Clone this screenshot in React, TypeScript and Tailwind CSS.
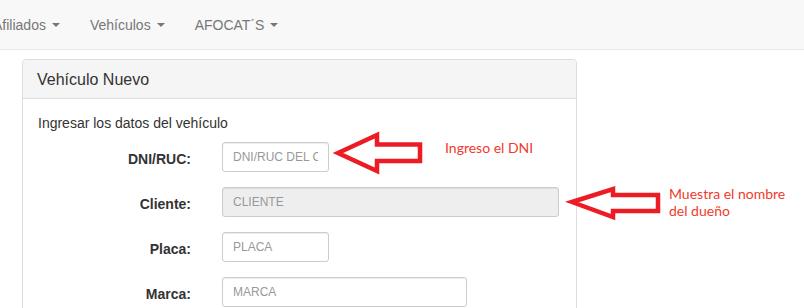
const navItems = [
  { label: "Afiliados", first: true },
  { label: "Vehículos" },
  { label: "AFOCAT´S" },
];

function Caret() {
  return (
    <span className="ml-[6px] inline-block h-0 w-0 border-x-4 border-t-4 border-x-transparent border-t-[#777] align-middle" />
  );
}

function Field({
  label,
  placeholder,
  width,
  disabled,
}: {
  label: string;
  placeholder: string;
  width: string;
  disabled?: boolean;
}) {
  return (
    <div className="mb-[15px] flex">
      <label className="w-[153px] pt-[7px] text-right text-[14px] font-bold leading-5 text-[#333]">{label}</label>
      <input
        disabled={disabled}
        placeholder={placeholder}
        className={`ml-[31px] h-[30px] rounded-[3px] border border-[#ccc] px-[10px] text-[12px] text-[#555] shadow-[inset_0_1px_1px_rgba(0,0,0,0.075)] outline-none placeholder:text-[#999] ${width} ${
          disabled ? "bg-[#eee]" : "bg-white"
        }`}
      />
    </div>
  );
}

export default function App() {
  return (
    <div className="relative h-[308px] w-[804px] overflow-hidden bg-white font-['Liberation_Sans',Arial,sans-serif] text-[#333]">
      <nav className="flex h-[50px] items-center border-b border-[#e7e7e7] bg-[#f8f8f8]">
        {navItems.map((item) => (
          <a
            key={item.label}
            className={`flex items-center px-[15px] text-[14px] leading-5 text-[#777] ${item.first ? "-ml-[22px]" : ""}`}
          >
            {item.label}
            <Caret />
          </a>
        ))}
      </nav>

      <div className="ml-[22px] mt-[9px] w-[555px] rounded border border-[#ddd]">
        <div className="rounded-t border-b border-[#ddd] bg-[#f5f5f5] px-[14px] pb-[9px] pt-[11px] text-[16px] leading-[17.6px]">
          Vehículo Nuevo
        </div>
        <div className="px-[15px] pt-[14px]">
          <p className="mb-[9px] text-[14px] leading-5">Ingresar los datos del vehículo</p>
          <Field label="DNI/RUC:" placeholder="DNI/RUC DEL CLIENTE" width="w-[107px]" />
          <Field label="Cliente:" placeholder="CLIENTE" width="w-[337px]" disabled />
          <Field label="Placa:" placeholder="PLACA" width="w-[107px]" />
          <Field label="Marca:" placeholder="MARCA" width="w-[245px]" />
        </div>
      </div>

      {/* annotations drawn over the screenshot */}
      <svg className="pointer-events-none absolute left-0 top-0" width="804" height="308">
        <polygon
          points="338,153 377,135 377,144.5 420,144.5 420,161 377,161 377,171"
          fill="none"
          stroke="#ed1c24"
          strokeWidth="4.5"
          strokeLinejoin="miter"
        />
        <polygon
          points="572,202 613,189 613,195 658,195 658,211 613,211 613,217"
          fill="none"
          stroke="#ed1c24"
          strokeWidth="4.5"
          strokeLinejoin="miter"
        />
      </svg>
      <div className="absolute left-[445px] top-[139px] font-['Lato',sans-serif] text-[14px] leading-[17px] text-[#f03a2c]">
        Ingreso el DNI
      </div>
      <div className="absolute left-[669px] top-[185px] font-['Lato',sans-serif] text-[14px] leading-[17px] text-[#f03a2c]">
        Muestra el nombre
        <br />
        del dueño
      </div>
    </div>
  );
}
